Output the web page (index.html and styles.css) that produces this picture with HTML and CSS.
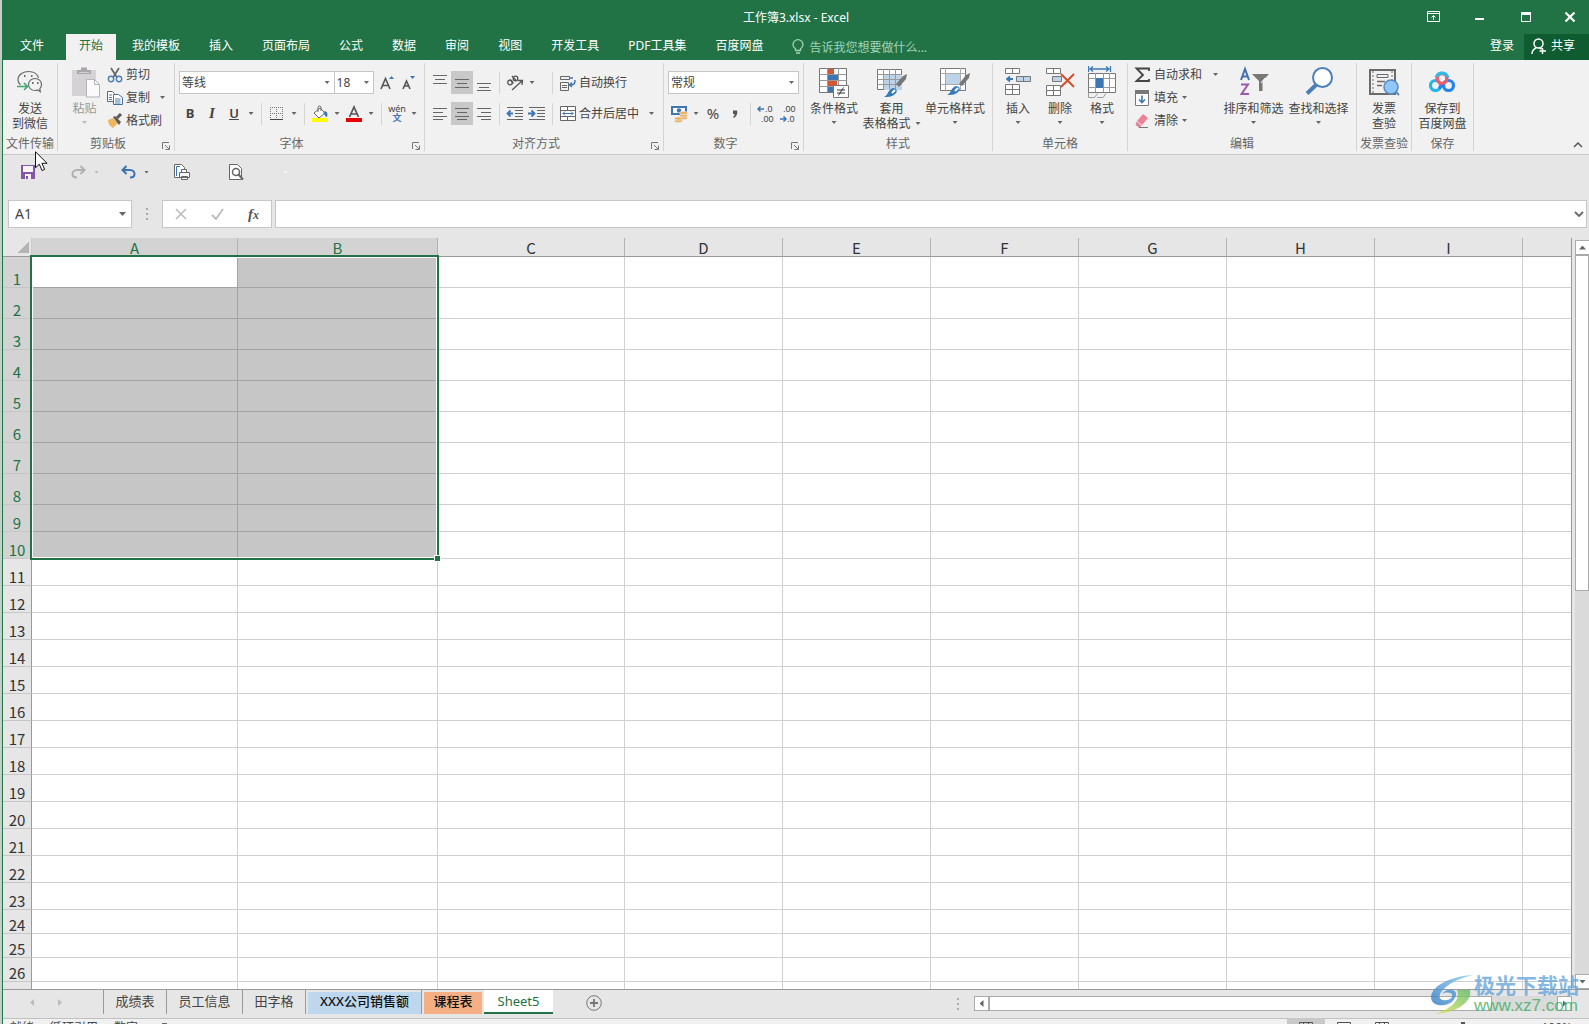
FILE: index.html
```html
<!DOCTYPE html>
<html lang="zh-CN">
<head>
<meta charset="utf-8">
<title>工作簿3.xlsx - Excel</title>
<link rel="stylesheet" href="styles.css">
</head>
<body>
<div class="app">
  <header class="titlebar">
    <h1 class="title">工作簿3.xlsx - Excel</h1>
    <div class="window-buttons">
      <button aria-label="功能区显示选项"><svg width="14" height="12" viewBox="0 0 14 12" fill="none" stroke="#fff"><path d="M.5 .5h12v10H.5zM.5 2.5h12M6.500 9V4.500M4.500 6.500l2-2 2 2"/></svg></button>
      <button aria-label="最小化"><svg width="12" height="12" viewBox="0 0 12 12"><path d="M1 8h9" stroke="#fff" stroke-width="2"/></svg></button>
      <button aria-label="最大化"><svg width="12" height="12" viewBox="0 0 12 12"><path d="M1.500 1.500h9v9h-9z" fill="none" stroke="#fff"/><path d="M1 1h10v3H1z" fill="#fff"/></svg></button>
      <button aria-label="关闭"><svg width="12" height="12" viewBox="0 0 12 12"><path d="M1.500 1.500l9 9M10.500 1.500l-9 9" stroke="#fff" stroke-width="2.200"/></svg></button>
    </div>
  </header>

  <nav class="tabs">
    <button class="file">文件</button>
    <button class="active">开始</button>
    <button>我的模板</button>
    <button>插入</button>
    <button>页面布局</button>
    <button>公式</button>
    <button>数据</button>
    <button>审阅</button>
    <button>视图</button>
    <button>开发工具</button>
    <button>PDF工具集</button>
    <button>百度网盘</button>
    <label class="tellme"><svg width="12" height="16" viewBox="0 0 12 16" fill="none" stroke="#a3d3b6" stroke-width="1.300"><path d="M3.500 11.500V9.800C2 8.800 1 7.300 1 5.700a5 5 0 0 1 10 0c0 1.600-1 3.100-2.500 4.100v1.700zM4 14h4"/></svg><input type="text" placeholder="告诉我您想要做什么..."></label>
    <button class="signin">登录</button>
    <button class="share"><svg width="16" height="17" viewBox="0 0 16 17" fill="none" stroke="#fff" stroke-width="1.500"><circle cx="7.500" cy="5.500" r="4.500"/><path d="M1 16c0-3 1.700-5 4-6M8.500 10l2 1M11.500 10v6M8.500 13h6.500"/></svg>共享</button>
  </nav>

  <section class="ribbon">
    <div class="group g-send">
      <div class="body center">
        <button class="big"><svg width="28" height="32" viewBox="0 0 28 32" fill="none" stroke="#6b6b6b" stroke-width="1.200"><path d="M22.500 12c-.8-3.900-4.800-6.500-9.700-6.500C7 5.500 2 9 2 13.700c0 2 1 3.800 2.500 5.200M2 13.700c0 2 .8 3.300 1.500 4"/><path d="M25.500 18.500c0-3.600-3-6-6.500-6s-6.500 2.400-6.500 6 3 6 6.500 6c1 0 2-.2 2.800-.6l2.500 1.800-.5-3c1-1 1.700-2.500 1.700-4.200z"/><path d="M1 20.500h10M8 17l3.500 3.500L8 24" stroke="#3fa66a" stroke-width="1.500"/><path d="M8 10h1.500M15 10h1.500M16 17h1.500M21 17h1.500" stroke-width="1.800"/></svg><span>发送<br>到微信</span></button>
      </div>
      <div class="label">文件传输</div>
    </div>

    <div class="group g-clip">
      <div class="body">
        <button class="big paste" disabled><svg width="30" height="32" viewBox="0 0 30 32"><path d="M2 4h24v26H2z" fill="#d5d2d5"/><path d="M7 8V4h4V1.500h6V4h4v4z" fill="#a9a7a9"/><path d="M9 6.500h10" stroke="#d5d2d5"/><path d="M16.500 13.500h8l5 5v12.500h-13z" fill="#fafafa" stroke="#b5b3b5"/><path d="M24.500 13.500v5h5" fill="none" stroke="#b5b3b5"/></svg><span>粘贴</span><i class="caret"></i></button>
        <div class="stack">
          <button><svg width="16" height="16" viewBox="0 0 16 16" fill="none"><path d="M4 1l6 9.500M12 1L6 10.500" stroke="#666" stroke-width="1.700"/><circle cx="4" cy="12" r="2.700" stroke="#4a7ebb" stroke-width="1.400"/><circle cx="12" cy="12" r="2.700" stroke="#4a7ebb" stroke-width="1.400"/></svg>剪切</button>
          <button><svg width="16" height="16" viewBox="0 0 16 16" fill="#fff" stroke="#666"><path d="M.5 1.500h5l2 2v8h-7z"/><path d="M6.500 4.500h5l4 3v7h-9z" stroke="#47709f"/><path d="M2 5h3M2 7.500h3M2 9.500h3M8 9h5.500M8 11h5.500M8 13h5.500" stroke="#4a7ebb"/></svg>复制<i class="caret far"></i></button>
          <button><svg width="16" height="16" viewBox="0 0 16 16"><path d="M1 7l5-2 5 5-5 5C3 13 1 11 1 7z" fill="#eeb65f"/><path d="M6 4l2-1 6 6-2 3z" fill="#5a5a5a"/><path d="M10 5l4-4" stroke="#5a5a5a" stroke-width="3"/></svg>格式刷</button>
        </div>
      </div>
      <div class="label with-launch">剪贴板<button class="launch" aria-label="剪贴板设置"><svg width="8" height="8" viewBox="0 0 8 8" fill="none" stroke="#777"><path d="M.5 7V.5H7M3 3l4 4M7.500 3.500v4h-4"/></svg></button></div>
    </div>

    <div class="group g-font">
      <div class="body rows">
        <div class="row">
          <div class="combo face"><select aria-label="字体"><option>等线</option></select><i class="caret"></i></div>
          <div class="combo size"><select aria-label="字号"><option>18</option></select><i class="caret"></i></div>
          <button class="tool" aria-label="增大字号"><svg width="20" height="20" viewBox="0 0 20 20"><path d="M4 16L8.500 5.500 13 16M5.500 12.500h6" fill="none" stroke="#555" stroke-width="1.600"/><path d="M12 6l2.500-3L17 6z" fill="#3d76b5"/></svg></button>
          <button class="tool" aria-label="减小字号"><svg width="20" height="20" viewBox="0 0 20 20"><path d="M4 16l3.500-8 3.500 8M5.500 13h4.500" fill="none" stroke="#555" stroke-width="1.600"/><path d="M11 3l2.500 3L16 3z" fill="#3d76b5"/></svg></button>
        </div>
        <div class="row">
          <button class="tool b">B</button><button class="tool i">I</button><button class="tool u">U</button><button class="drop" aria-label="下划线"><i class="caret"></i></button>
          <i class="sep"></i>
          <button class="tool" aria-label="边框"><svg width="14" height="14" viewBox="0 0 14 14" stroke="#777" stroke-dasharray="1 1"><path d="M.5 0v13M6.500 0v13M12.500 0v13M0 .5h13M0 6.500h13"/><path d="M0 12.500h13" stroke="#444" stroke-dasharray="none"/></svg></button><button class="drop" aria-label="更多边框"><i class="caret"></i></button>
          <i class="sep"></i>
          <button class="tool" aria-label="填充颜色"><svg width="18" height="18" viewBox="0 0 18 18"><path d="M3 8l6-5 5 5-6 5z" fill="#fff" stroke="#666"/><path d="M7 7V2.500a1.500 1.500 0 0 1 3 0V6" fill="none" stroke="#666"/><path d="M14 6c2.500 1 3 3 2 6-2 0-2-3-4-4z" fill="#3d76b5"/><path d="M1 13h16v4H1z" fill="#ff0"/></svg></button><button class="drop" aria-label="更多填充颜色"><i class="caret"></i></button>
          <button class="tool" aria-label="字体颜色"><svg width="18" height="18" viewBox="0 0 18 18"><path d="M4.500 12L9 2l4.500 10M6 9h6" fill="none" stroke="#555" stroke-width="1.700"/><path d="M1 13h16v4H1z" fill="#e80000"/></svg></button><button class="drop" aria-label="更多字体颜色"><i class="caret"></i></button>
          <i class="sep"></i>
          <button class="tool pinyin"><span>wén</span><b>文</b></button><button class="drop" aria-label="拼音选项"><i class="caret"></i></button>
        </div>
      </div>
      <div class="label with-launch">字体<button class="launch" aria-label="字体设置"><svg width="8" height="8" viewBox="0 0 8 8" fill="none" stroke="#777"><path d="M.5 7V.5H7M3 3l4 4M7.500 3.500v4h-4"/></svg></button></div>
    </div>

    <div class="group g-align">
      <div class="body rows">
        <div class="row">
          <button class="tool" aria-label="顶端对齐"><svg width="14" height="16" viewBox="0 0 14 16" stroke="#666"><path d="M0 .5h14M2 4.500h10M0 8.500h14"/></svg></button><button class="tool on" aria-label="垂直居中"><svg width="14" height="16" viewBox="0 0 14 16" stroke="#666"><path d="M0 4.500h14M2 8.500h10M0 12.500h14"/></svg></button><button class="tool" aria-label="底端对齐"><svg width="14" height="16" viewBox="0 0 14 16" stroke="#666"><path d="M0 8.500h14M2 12.500h10M0 15.500h14"/></svg></button>
          <i class="sep"></i>
          <div class="pair"><button class="tool" aria-label="方向"><svg width="18" height="18" viewBox="0 0 18 18" fill="none" stroke="#555" stroke-width="1.300"><circle cx="4" cy="8.500" r="2.300"/><path d="M4 5.500l3.500 4M6 2l4.500 5"/><circle cx="9.500" cy="4.500" r="2.300"/><path d="M6 16l10-9M12 6.500l4.500 0-.5 4.500"/></svg></button><button class="drop" aria-label="更多方向"><i class="caret"></i></button></div>
          <i class="sep"></i>
          <button class="text-tool"><svg width="16" height="16" viewBox="0 0 16 16" fill="none" stroke="#666"><path d="M.5 1.500h9v3h-9zM.5 7.500h8v8h-8zM2 10.500h5M2 12.500h5"/><path d="M9 3h4M15 5c0 4-1 5-5 5M12 7.500L9.500 10l2.500 2" stroke="#3d76b5" stroke-width="1.500"/></svg>自动换行</button>
        </div>
        <div class="row">
          <button class="tool" aria-label="左对齐"><svg width="14" height="12" viewBox="0 0 14 12" stroke="#666"><path d="M0 .5h14M0 4.500h10M0 8.500h14M0 11.500h10"/></svg></button><button class="tool on" aria-label="居中"><svg width="14" height="12" viewBox="0 0 14 12" stroke="#666"><path d="M0 .5h14M2 4.500h10M0 8.500h14M2 11.500h10"/></svg></button><button class="tool" aria-label="右对齐"><svg width="14" height="12" viewBox="0 0 14 12" stroke="#666"><path d="M0 .5h14M4 4.500h10M0 8.500h14M4 11.500h10"/></svg></button>
          <i class="sep"></i>
          <div class="pair"><button class="tool" aria-label="减少缩进"><svg width="18" height="14" viewBox="0 0 18 14" stroke="#666"><path d="M1 .5h16M9 3.500h8M9 6.500h8M9 9.500h8M1 12.500h16"/><path d="M1 6.500h6M4.500 3.500l-3 3 3 3" fill="none" stroke="#3d76b5" stroke-width="1.800"/></svg></button><button class="tool" aria-label="增加缩进"><svg width="18" height="14" viewBox="0 0 18 14" stroke="#666"><path d="M1 .5h16M9 3.500h8M9 6.500h8M9 9.500h8M1 12.500h16"/><path d="M0 6.500h6M3.500 3.500l3 3-3 3" fill="none" stroke="#3d76b5" stroke-width="1.800"/></svg></button></div>
          <i class="sep"></i>
          <button class="text-tool"><svg width="16" height="16" viewBox="0 0 16 16" fill="#fff" stroke="#666"><path d="M.5 .5h15v14H.5zM.5 4.500h15M.5 10.500h15M7.500 .5v4M7.500 10.500v4"/><path d="M2.500 7.500h11M5 5.500l-2 2 2 2M11 5.500l2 2-2 2" fill="none" stroke="#3d76b5"/></svg>合并后居中<i class="caret far"></i></button>
        </div>
      </div>
      <div class="label with-launch">对齐方式<button class="launch" aria-label="对齐设置"><svg width="8" height="8" viewBox="0 0 8 8" fill="none" stroke="#777"><path d="M.5 7V.5H7M3 3l4 4M7.500 3.500v4h-4"/></svg></button></div>
    </div>

    <div class="group g-num">
      <div class="body rows">
        <div class="row">
          <div class="combo format"><select aria-label="数字格式"><option>常规</option></select><i class="caret"></i></div>
        </div>
        <div class="row">
          <button class="tool" aria-label="会计数字格式"><svg width="18" height="18" viewBox="0 0 18 18"><path d="M1 1h16v9H1z" fill="#3d76b5"/><path d="M3 3h12v5H3z" fill="#fff"/><circle cx="9" cy="5.500" r="2.200" fill="#3d76b5"/><g fill="#eab265" stroke="#f0f0f0" stroke-width=".6"><ellipse cx="13.500" cy="13" rx="4" ry="1.700"/><ellipse cx="13.500" cy="10.500" rx="4" ry="1.700"/><ellipse cx="13.500" cy="8" rx="4" ry="1.700"/><ellipse cx="8.500" cy="16" rx="4" ry="1.700"/><ellipse cx="8.500" cy="13.500" rx="4" ry="1.700"/></g></svg></button><button class="drop" aria-label="更多会计格式"><i class="caret"></i></button>
          <button class="tool pct">%</button><button class="tool" aria-label="千位分隔样式"><svg width="8" height="10" viewBox="0 0 8 10"><path d="M2 1.500h4c1 3-.5 6-3 7.500l-1-1c1.200-1 1.700-2 1.500-3H2z" fill="#555"/></svg></button>
          <i class="sep"></i>
          <button class="tool" aria-label="增加小数位数"><svg class="decimals" width="18" height="20" viewBox="0 0 18 20"><text x="8" y="8">.0</text><text x="4" y="18">.00</text><path d="M1 5h6M3.500 2.500L1 5l2.500 2.500"/></svg></button><button class="tool" aria-label="减少小数位数"><svg class="decimals" width="18" height="20" viewBox="0 0 18 20"><text x="4" y="8">.00</text><text x="8" y="18">.0</text><path d="M1 15h6M4.500 12.500L7 15l-2.500 2.500"/></svg></button>
        </div>
      </div>
      <div class="label with-launch">数字<button class="launch" aria-label="数字设置"><svg width="8" height="8" viewBox="0 0 8 8" fill="none" stroke="#777"><path d="M.5 7V.5H7M3 3l4 4M7.500 3.500v4h-4"/></svg></button></div>
    </div>

    <div class="group g-style">
      <div class="body">
        <button class="big w-cond"><svg width="30" height="32" viewBox="0 0 30 32"><path d="M.5 2.500h27v24H.5z" fill="#fff" stroke="#777"/><path d="M.5 8.500h27M.5 14.500h27M.5 20.500h27M8.500 2v24M19.500 2v24" stroke="#999"/><path d="M9 3h6v5H9zM9 15h9v5H9z" fill="#d65532"/><path d="M9 9h10v5H9zM9 21h5v5H9z" fill="#3d76b5"/><path d="M14.500 19.500h15v12h-15z" fill="#fff" stroke="#777"/><path d="M18 24h8M18 27h8M24.500 21.500l-5 8" stroke="#333"/></svg><span>条件格式</span><i class="caret"></i></button>
        <button class="big w-table"><svg width="30" height="32" viewBox="0 0 30 32"><path d="M.5 3.500h24v20H.5z" fill="#fff" stroke="#777"/><path d="M7 9h18v15H7z" fill="#bdd3e9"/><path d="M.5 8.500h24M.5 13.500h24M.5 18.500h24M6.500 3v20M12.500 3v20M18.500 3v20" stroke="#999"/><path d="M19 18l7-8 4-2-1 5-7 8z" fill="#777"/><path d="M7 31c4-1 4-8 9-9 4 0 5 4 2 6-3 3-7 3-11 3z" fill="#3579b8"/><path d="M15 27l3-3" stroke="#fff" stroke-width="2"/></svg><span>套用<br>表格格式<i class="caret in"></i></span></button>
        <button class="big w-cell"><svg width="30" height="32" viewBox="0 0 30 32"><path d="M.5 2.500h25v22H.5z" fill="#fff" stroke="#777"/><path d="M.5 7.500h25M.5 18.500h25M5.500 2v22M20.500 2v22" stroke="#aaa"/><path d="M6 8h14v10H6z" fill="#bdd3e9"/><path d="M19 18l7-9 4-2-1 5-7 8z" fill="#777"/><path d="M7 29c4-1 4-8 9-9 4 0 5 4 2 6-3 3-7 3-11 3z" fill="#3579b8"/><path d="M15 25l3-3" stroke="#fff" stroke-width="2"/></svg><span>单元格样式</span><i class="caret"></i></button>
      </div>
      <div class="label">样式</div>
    </div>

    <div class="group g-cells">
      <div class="body">
        <button class="big w-42"><svg width="28" height="32" viewBox="0 0 28 32" fill="#fff" stroke="#777"><path d="M1.500 2.500h14v5h-14zM8.500 2.500v5M1.500 18.500h14v10h-14zM8.500 18.500v10M1.500 23.500h14"/><path d="M12.500 10.500h14v5h-14zM19.500 10.500v5" fill="#bdd3e9"/><path d="M3 13h6M6 10.500L3 13l3 2.500" fill="none" stroke="#3d76b5" stroke-width="1.800"/></svg><span>插入</span><i class="caret"></i></button>
        <button class="big w-42"><svg width="30" height="32" viewBox="0 0 30 32" fill="#fff" stroke="#777"><path d="M1.500 2.500h14v5h-14zM8.500 2.500v5M1.500 19.500h14v10h-14zM8.500 19.500v10M1.500 24.500h14"/><path d="M7.500 10.500h9v5h-9z" fill="#bdd3e9"/><path d="M16 8l13 13M29 8L16 21" stroke="#d9482b" stroke-width="1.800"/></svg><span>删除</span><i class="caret"></i></button>
        <button class="big w-42"><svg width="28" height="32" viewBox="0 0 28 32"><path d="M.5 0v6M22.500 0v6M2 3h19M5 .5L2 3l3 2.500M18 .5L21 3l-3 2.500" fill="none" stroke="#3d76b5" stroke-width="1.300"/><path d="M.5 7.500h27v19H.5z" fill="#fff" stroke="#777"/><path d="M.5 12.500h27M.5 21.500h27M7.500 7v19M15.500 7v19M21.500 7v19M.5 26.500v5h6l3-4M9 31.500h6l3-4" fill="none" stroke="#999"/><path d="M8 12h7v10H8z" fill="#3d76b5"/></svg><span>格式</span><i class="caret"></i></button>
      </div>
      <div class="label">单元格</div>
    </div>

    <div class="group g-edit">
      <div class="body">
        <div class="stack edit">
          <button><svg width="16" height="16" viewBox="0 0 16 16"><path d="M15 4V1.500H2.500L9 8l-6.500 6H15V12" fill="none" stroke="#444" stroke-width="1.800"/></svg>自动求和<i class="caret far"></i></button>
          <button><svg width="16" height="16" viewBox="0 0 16 16"><path d="M1.500 .5h13v15h-13z" fill="#fff" stroke="#777"/><path d="M1 0h14v4H1z" fill="#777"/><path d="M8 5.500v7M5 9.500l3 3 3-3" fill="none" stroke="#3d76b5" stroke-width="1.600"/></svg>填充<i class="caret"></i></button>
          <button><svg width="16" height="16" viewBox="0 0 16 16"><path d="M9 1l5 4-6 7-5-4z" fill="#ec8296"/><path d="M2.500 8.500l5 4-2 2.500-4-3z" fill="#d7899a"/><path d="M5 14.500h9" stroke="#777"/></svg>清除<i class="caret"></i></button>
        </div>
        <button class="big w-65"><svg width="32" height="32" viewBox="0 0 32 32"><path d="M3 14L7 3l4 11M4.500 10.500h5" fill="none" stroke="#4472ae" stroke-width="2"/><path d="M3 18.500h7L3.500 28H11" fill="none" stroke="#9a58b0" stroke-width="2"/><path d="M14 8h17l-6.500 7v10h-3.500V15z" fill="#777"/><path d="M23 17l4-5" stroke="#fff"/></svg><span>排序和筛选</span><i class="caret"></i></button>
        <button class="big w-65"><svg width="30" height="32" viewBox="0 0 30 32"><circle cx="18.500" cy="11.500" r="9.500" fill="#fff" stroke="#4a7ebb" stroke-width="2"/><path d="M12 19L3 27.500" stroke="#4a7ebb" stroke-width="4"/></svg><span>查找和选择</span><i class="caret"></i></button>
      </div>
      <div class="label">编辑</div>
    </div>

    <div class="group g-inv">
      <div class="body center">
        <button class="big"><svg width="32" height="32" viewBox="0 0 32 32" fill="none"><path d="M2 4h25v24H2z" stroke="#6b6b6b" stroke-width="2"/><path d="M5 5v22M24 5v22" stroke="#6b6b6b" stroke-dasharray="2 2"/><path d="M9 8.500h11v3H9z" stroke="#6b6b6b"/><path d="M9 15.500h8M9 19.500h5" stroke="#6b6b6b" stroke-width="1.500"/><circle cx="23" cy="21" r="7" fill="#8fc7fa" stroke="#5889bd" stroke-width="1.500"/><path d="M28 26l3 3" stroke="#5889bd" stroke-width="2"/></svg><span>发票<br>查验</span></button>
      </div>
      <div class="label">发票查验</div>
    </div>

    <div class="group g-save">
      <div class="body center">
        <button class="big"><svg width="28" height="32" viewBox="0 0 28 32" fill="none" stroke-width="3.200"><circle cx="7.500" cy="19.500" r="5" stroke="#22b4f0"/><circle cx="20.500" cy="19.500" r="5" stroke="#2585f0"/><path d="M16.500 16.500l-5.500 6" stroke="#2585f0"/><path d="M8.300 12a5.800 5.800 0 0 1 11.400 0" stroke="#35b8e8"/><circle cx="14" cy="12.500" r="4.800" stroke="#f25a68"/><path d="M8.500 11a5.800 5.800 0 0 1 11 0" stroke="#35b8e8"/></svg><span>保存到<br>百度网盘</span></button>
      </div>
      <div class="label">保存</div>
    </div>
    <button class="collapse" aria-label="折叠功能区"><svg width="10" height="8" viewBox="0 0 10 8"><path d="M1 6l4-4 4 4" fill="none" stroke="#555" stroke-width="1.500"/></svg></button>
  </section>

  <div class="qat">
    <button class="save" aria-label="保存"><svg width="14" height="14" viewBox="0 0 14 14"><path d="M0 0h14v14H0z" fill="#8455a8"/><path d="M2 1h10v6H2zM4 9h6v5H4z" fill="#f4f4f4"/><path d="M5 11h2v3H5z" fill="#8455a8"/></svg></button>
    <button class="redo" aria-label="恢复"><svg width="15" height="14" viewBox="0 0 15 14" fill="none" stroke="#b0b0b0" stroke-width="2"><path d="M13 5H6C3 5 1.500 7 1.500 9S3 12.500 6 12.500M9.500 1L13.500 5l-4 4"/></svg><i class="caret"></i></button>
    <button class="undo" aria-label="撤消"><svg width="15" height="14" viewBox="0 0 15 14" fill="none" stroke="#3d72b0" stroke-width="2"><path d="M2 5h7c3 0 4.500 2 4.500 4s-1.500 3.500-4.500 3.500M5.500 1L1.500 5l4 4"/></svg><i class="caret"></i></button>
    <button class="print" aria-label="快速打印"><svg width="16" height="16" viewBox="0 0 16 16" fill="#fff" stroke="#666"><path d="M.5 .5h7l3 3v10H.5z"/><path d="M2.500 12V2.500H6" fill="none" stroke="#3d76b5"/><path d="M5.500 8.500h10v5h-10zM7.500 5.500h5v3h-5zM7.500 12.500h6v3h-6z" /></svg></button>
    <button class="preview" aria-label="打印预览"><svg width="15" height="17" viewBox="0 0 15 17" fill="none" stroke="#666"><path d="M.5 .5h8l4 4v11H.5z" fill="#fff"/><circle cx="7" cy="8" r="3.500" stroke-width="1.500"/><path d="M9.500 10.500L14 15.500" stroke-width="2"/></svg></button>
    <button class="more" aria-label="自定义快速访问工具栏"><i class="caret"></i></button>
  </div>

  <div class="formula">
    <div class="namebox"><input type="text" value="A1" aria-label="名称框"><i class="caret"></i></div>
    <svg class="grip" width="3" height="12" viewBox="0 0 3 12" fill="#aaa"><path d="M0 0h2v2H0zM0 5h2v2H0zM0 10h2v2H0z"/></svg>
    <div class="fx">
      <button aria-label="取消"><svg width="12" height="12" viewBox="0 0 12 12"><path d="M1 1l10 10M11 1L1 11" stroke="#bbb" stroke-width="1.600"/></svg></button>
      <button aria-label="输入"><svg width="13" height="12" viewBox="0 0 13 12"><path d="M1 7l4 4 7-10" fill="none" stroke="#bbb" stroke-width="1.800"/></svg></button>
      <button class="fn" aria-label="插入函数">f<small>x</small></button>
    </div>
    <div class="entry"><input type="text" aria-label="编辑栏"><svg width="10" height="8" viewBox="0 0 10 8"><path d="M1 2l4 4 4-4" fill="none" stroke="#666" stroke-width="1.800"/></svg></div>
  </div>

  <main class="sheet">
    <div class="grid-area">
      <table class="grid">
        <colgroup><col class="c-head"><col class="c-a"><col class="c-b"><col class="c-c"><col class="c-d"><col class="c-n"><col class="c-n"><col class="c-n"><col class="c-n"><col class="c-n"><col></colgroup>
        <thead><tr><th class="corner"></th><th class="sel">A</th><th class="sel">B</th><th>C</th><th>D</th><th>E</th><th>F</th><th>G</th><th>H</th><th>I</th><th class="last"></th></tr></thead>
        <tbody id="rows"></tbody>
      </table>
      <div class="selection"></div>
    </div>
    <div class="vscroll">
      <button aria-label="向上滚动"><i class="tri up"></i></button>
      <div class="thumb"></div>
      <div class="track"></div>
      <button aria-label="向下滚动"><i class="tri down"></i></button>
    </div>
  </main>

  <footer class="sheetbar">
    <div class="navs"><button aria-label="上一个"><i class="tri left dim"></i></button><button aria-label="下一个"><i class="tri right dim"></i></button></div>
    <div class="sheet-tabs">
      <button class="t1">成绩表</button>
      <button class="t2">员工信息</button>
      <button class="t1">田字格</button>
      <button class="blue"><span>XXX公司销售额</span></button>
      <button class="orange"><span>课程表</span></button>
      <button class="current">Sheet5</button>
    </div>
    <button class="add" aria-label="新工作表"><svg width="16" height="16" viewBox="0 0 16 16" fill="none" stroke="#777"><circle cx="8" cy="8" r="7.300"/><path d="M8 4v8M4 8h8" stroke-width="1.800"/></svg></button>
    <svg class="grip" width="3" height="12" viewBox="0 0 3 12" fill="#aaa"><path d="M0 0h2v2H0zM0 5h2v2H0zM0 10h2v2H0z"/></svg>
    <div class="hscroll">
      <button aria-label="向左滚动"><i class="tri left"></i></button>
      <div class="thumb"></div>
      <div class="track"></div>
      <button aria-label="向右滚动"><i class="tri right"></i></button>
    </div>
  </footer>

  <div class="status">
    <span>就绪</span><span>循环引用</span><span>数字</span>
    <svg width="14" height="12" viewBox="0 0 14 12"><path d="M0 2h6v3H0zM8 1h5v4H8zM0 6h13v5H0z" fill="#666"/></svg>
    <div class="views">
      <button class="on" aria-label="普通"><svg width="14" height="12" viewBox="0 0 14 12" fill="none" stroke="#555"><path d="M.5 .5h13v11H.5zM.5 4.500h13M.5 8.500h13M4.500 .5v11M9.500 .5v11"/></svg></button>
      <button aria-label="页面布局"><svg width="14" height="12" viewBox="0 0 14 12" fill="none" stroke="#555"><path d="M.5 .5h13v11H.5zM3.500 2.500h7v7h-7z"/></svg></button>
      <button aria-label="分页预览"><svg width="14" height="12" viewBox="0 0 14 12" fill="none" stroke="#555"><path d="M.5 .5h13v11H.5zM4.500 .5v6h5v-6"/></svg></button>
    </div>
    <i class="knob"></i>
    <span class="zoom">100%</span>
  </div>
</div>

<svg class="pointer" width="13" height="21" viewBox="0 0 13 21"><path d="M.5 .8v16l3.800-3.600 2.700 6.300 2.600-1.100-2.700-6.100h5.200z" fill="#fff" stroke="#111"/></svg>
<div class="watermark">
  <svg width="44" height="40" viewBox="0 0 44 40"><defs><linearGradient id="wb" x1="0" y1="1" x2="1" y2="0"><stop offset="0" stop-color="#2f78c4"/><stop offset="1" stop-color="#8ed0f2"/></linearGradient><linearGradient id="wg" x1="0" y1="1" x2="1" y2="0"><stop offset="0" stop-color="#e3e04e"/><stop offset="1" stop-color="#5cbd6c"/></linearGradient></defs><path d="M43 0C22 1 2 10 1 22c0 7 7 9 13 8 8-1 12-6 11-11-2 4-7 7-12 6C4 23 13 7 43 0z" fill="url(#wb)"/><path d="M12 19c3-5 12-6 14-1 1 6-6 9-12 8 5 0 9-3 8-6s-6-3-10-1z" fill="#4b92d3"/><path d="M27 15h13c2 10-9 22-35 24 15-5 26-13 22-24z" fill="url(#wg)"/></svg>
  <div><b>极光下载站</b><span>www.xz7.com</span></div>
</div>
<script src="script.js"></script>
</body>
</html>
```
FILE: styles.css
```css
* { box-sizing: border-box; }
body {
  margin: 0;
  height: 100vh;
  overflow: hidden;
  position: relative;
  background: #c3cfc8;
  color: #444;
  font: 12px/15px "Noto Sans", "Noto Sans CJK SC", sans-serif;
}
button, input, select { font: inherit; color: inherit; border: 0; background: none; padding: 0; margin: 0; }
input { min-width: 0; outline: 0; }
svg { display: block; flex: none; }
.app {
  display: flex;
  flex-direction: column;
  height: calc(100vh + 14px);
  margin-left: 2px;
  border-left: 1px solid #217346;
  background: #e6e6e6;
}
.caret { flex: none; width: 5px; height: 3px; background: #666; clip-path: polygon(0 0, 100% 0, 50% 100%); }

/* title and ribbon tabs */
.titlebar { display: grid; grid-template-columns: 1fr auto 1fr; height: 34px; background: #217346; color: #fff; align-items: center; }
.title { grid-column: 2; margin: 0; font-size: 12px; font-weight: 400; }
.window-buttons { justify-self: end; display: flex; }
.window-buttons button { width: 46px; height: 32px; display: grid; place-items: center; }
.window-buttons button:last-child { width: 40px; padding-left: 2px; }
.tabs { display: flex; gap: 3px; height: 26px; padding-left: 4px; background: #217346; color: #fff; }
.tabs button { padding: 0 13px 2px; line-height: 22px; white-space: nowrap; }
.tabs .file { margin-right: 6px; }
.tabs .active { background: #f1f1f1; color: #217346; }
.tellme { display: flex; align-items: center; gap: 5px; margin-left: 13px; flex: 1; }
.tellme input { flex: 1; }
.tellme input::placeholder { color: #a3d3b6; opacity: 1; }
.tabs .signin { padding: 0 7px 2px; }
.tabs .share { display: flex; align-items: center; gap: 4px; width: 65px; padding: 0 7px 2px; background: #0e5c2f; }

/* ribbon */
.ribbon { display: flex; padding: 3px 0; height: 95px; background: #f1f1f1; border-bottom: 1px solid #c8c8c8; }
.group { flex: none; display: flex; flex-direction: column; border-right: 1px solid #d4d4d4; }
.g-send { width: 55px; }
.g-clip { width: 117px; }
.g-font { width: 250px; }
.g-align { width: 239px; }
.g-num { width: 140px; }
.g-style { width: 189px; }
.g-cells { width: 135px; }
.g-edit { width: 229px; }
.g-inv { width: 55px; }
.g-save { width: 62px; }
.body { display: flex; height: 73px; padding: 0 4px; }
.body.center { justify-content: center; padding: 0; }
.body.rows { flex-direction: column; gap: 8px; padding-top: 8px; }
.row { display: flex; align-items: center; height: 23px; }
.label { position: relative; text-align: center; color: #666; white-space: nowrap; }
.with-launch { padding-right: 16px; }
.launch { position: absolute; right: 4px; top: 6px; }
.big { display: flex; flex-direction: column; align-items: center; padding-top: 3px; white-space: nowrap; line-height: 15px; }
.big svg { margin-bottom: 3px; }
.big > .caret { margin-top: 5px; }
.caret.in { display: inline-block; margin: 0 0 3px 5px; }
.paste { width: 45px; color: #999; }
.paste .caret { background: #bbb; }
.w-cond { width: 52px; }
.w-table { width: 63px; }
.w-cell { width: 64px; }
.w-42 { width: 42px; }
.w-65 { width: 65px; }
.stack { display: flex; flex-direction: column; flex: 1; }
.stack.edit { flex: none; width: 89px; padding-left: 2px; }
.stack button { display: flex; align-items: center; gap: 3px; height: 23px; white-space: nowrap; }
.stack.edit button { gap: 4px; }
.stack .caret.far { margin-left: 7px; }
.combo { position: relative; display: flex; height: 23px; border: 1px solid #c6c6c6; background: #fff; }
.combo select { appearance: none; flex: 1; padding-left: 2px; outline: 0; }
.combo .caret { position: absolute; right: 4px; top: 9px; }
.face { width: 158px; }
.size { width: 41px; margin: 0 2px 0 -1px; }
.format { width: 131px; }
.tool { flex: none; width: 22px; height: 23px; display: grid; place-items: center; }
.tool.on { background: #c8c8c8; }
.drop { flex: none; width: 12px; height: 23px; display: grid; place-items: center; }
.sep { width: 1px; height: 22px; margin: 0 4px; background: #d4d4d4; }
.pair { display: flex; width: 44px; }
.tool.b, .tool.i, .tool.u { font-size: 13px; font-weight: 700; }
.tool.i { font-family: "Liberation Serif", serif; font-style: italic; font-size: 15px; }
.tool.u { text-decoration: underline; font-weight: 600; }
.pinyin { place-content: center; font-size: 9px; line-height: 9px; }
.pinyin b { color: #3d76b5; line-height: 10px; }
.pct { font-size: 15px; }
.decimals { font: 9px "Liberation Sans", sans-serif; fill: #444; }
.decimals path { fill: none; stroke: #3d76b5; stroke-width: 1.5; }
.text-tool { display: flex; align-items: center; gap: 3px; margin-left: 3px; white-space: nowrap; }
.text-tool .far { margin-left: 7px; }
.collapse { margin: auto 6px 2px auto; }

/* quick access toolbar */
.qat { display: flex; align-items: center; height: 45px; padding: 0 18px 11px; }
.qat button { display: flex; align-items: center; gap: 8px; }
.qat .save { margin-right: 36px; }
.qat .redo { margin-right: 22px; }
.qat .undo { margin-right: 25px; }
.qat .print { margin-right: 39px; }
.qat .preview { margin-right: 39px; }
.redo .caret { background: #bbb; }
.more .caret { background: #f6f6f6; }

/* formula bar */
.formula { display: flex; align-items: center; height: 28px; margin: 0 2px 10px 5px; }
.namebox, .fx, .entry { display: flex; align-items: center; height: 28px; background: #fff; border: 1px solid #c6c6c6; }
.namebox { width: 124px; padding: 0 5px 0 6px; font-size: 14px; }
.namebox input { flex: 1; padding-bottom: 2px; }
.namebox .caret { width: 7px; height: 4px; }
.formula .grip { margin: 0 13px 0 14px; }
.fx { width: 110px; padding: 0 12px; justify-content: space-between; }
.fn { font: italic 700 15px/20px "Liberation Serif", serif; color: #555; }
.fn small { font-size: 12px; }
.entry { flex: 1; margin-left: 3px; padding-right: 2px; }
.entry input { flex: 1; }

/* worksheet */
.sheet { flex: 1; min-height: 0; display: flex; overflow: hidden; }
.grid-area { flex: 1; min-width: 0; position: relative; overflow: hidden; border-right: 1px solid #999; }
.grid { width: 100%; table-layout: fixed; border-collapse: separate; border-spacing: 0; }
.c-head { width: 29px; }
.c-a { width: 206px; }
.c-b { width: 200px; }
.c-c { width: 187px; }
.c-d { width: 158px; }
.c-n { width: 148px; }
.grid th { padding: 0; background: #e6e6e6; color: #333; font: 15px/16px "Noto Sans CJK SC", sans-serif; }
.grid thead th { height: 19px; padding-top: 2px; border-right: 1px solid #b4b4b4; border-bottom: 1px solid #999; }
tbody th { border-right: 1px solid #999; border-bottom: 1px solid #c6c6c6; vertical-align: bottom; }
.grid .last { border-right: 0; }
.grid th.sel { background: #d3d3d3; color: #217346; }
.grid th.corner { background: linear-gradient(135deg, #e6e6e6 50%, #b4b4b4 50%) 15px 4px / 11px 11px no-repeat #e6e6e6; border-right-color: #ccc; }
.grid td { padding: 0; background: #fff; border-right: 1px solid #d0d0d0; border-bottom: 1px solid #d0d0d0; }
.grid td.sel { background: #c6c6c6; border-color: #a3a3a3; }
.grid td.cursor { background: #fff; }
.r31 { height: 31px; }
.r27 { height: 27px; }
.r24 { height: 24px; }
.selection { position: absolute; left: 27px; top: 17px; width: 409px; height: 305px; border: 2px solid #217346; box-shadow: inset 0 0 0 1px #fff; }
.selection::after { content: ""; position: absolute; right: -3px; bottom: -3px; width: 5px; height: 5px; background: #217346; outline: 1px solid #fff; }
.tri { display: block; width: 7px; height: 4px; background: #666; }
.tri.up { clip-path: polygon(50% 0, 100% 100%, 0 100%); }
.tri.down { clip-path: polygon(0 0, 100% 0, 50% 100%); }
.tri.left, .tri.right { width: 4px; height: 7px; }
.tri.left { clip-path: polygon(100% 0, 100% 100%, 0 50%); }
.tri.right { clip-path: polygon(0 0, 100% 50%, 0 100%); }
.tri.dim { background: #bbb; }
.vscroll { width: 17px; padding: 2px 0 0 3px; display: flex; flex-direction: column; }
.vscroll button, .hscroll button { flex: none; display: grid; place-items: center; width: 15px; height: 15px; background: #fff; border: 1px solid #aaa; }
.vscroll .thumb { height: 336px; background: #fff; border: 1px solid #aaa; }
.vscroll .track { flex: 1; background: #dadada; }

/* sheet tabs */
.sheetbar { display: flex; flex: none; height: 30px; border-top: 1px solid #999; border-bottom: 1px solid #c0c0c0; font-size: 13px; }
.navs { display: flex; width: 100px; padding: 0 0 3px 27px; gap: 24px; }
.sheet-tabs { display: flex; height: 24px; }
.sheet-tabs button { border-left: 1px solid #999; white-space: nowrap; line-height: 20px; padding: 0 0 3px; }
.sheet-tabs .t1 { width: 63px; }
.sheet-tabs .t2 { width: 76px; }
.sheet-tabs .blue, .sheet-tabs .orange { color: #111; font-weight: 500; padding: 2px 0 0 2px; }
.sheet-tabs span { display: block; height: 22px; line-height: 18px; }
.sheet-tabs .blue { width: 116px; }
.sheet-tabs .orange { width: 61px; margin-right: 2px; }
.blue span { background: #bdd7ee; }
.orange span { background: #f4b084; }
.sheet-tabs .current { width: 69px; border: 0; border-bottom: 2px solid #217346; padding: 0; background: #fff; color: #217346; }
.add { margin: 0 auto 3px 33px; }
.sheetbar .grip { margin: 8px 14px 0 0; }
.hscroll { display: flex; align-items: flex-start; width: 39%; max-width: 615px; padding: 6px 17px 0 0; }
.hscroll .thumb { flex: 503; height: 15px; background: #fff; border: 1px solid #aaa; }
.hscroll .track { flex: 65; height: 15px; background: #dadada; }

/* status bar */
.status { display: flex; flex: none; align-items: center; height: 19px; padding: 0 17px 2px 7px; background: #f1f1f1; gap: 16px; }
.views { display: flex; margin-left: auto; }
.views button { width: 38px; height: 19px; display: grid; place-items: center; }
.views .on { background: #c8c8c8; }
.knob { width: 4px; height: 12px; background: #555; margin-left: 44px; }
.zoom { margin-left: 60px; }

.pointer { position: absolute; left: 35px; top: 151px; }
.watermark { position: absolute; right: 10px; bottom: 9px; display: flex; opacity: .8; }
.watermark div { display: flex; flex-direction: column; gap: 2px; }
.watermark b { font-size: 21px; line-height: 20px; color: #68a7dc; }
.watermark span { font: 17px/18px "Liberation Sans", sans-serif; color: #3fae62; }
```
FILE: script.js
```js
// Row heights: 1-8 tall, 9-23 medium, 24 onwards short.
const body = document.getElementById('rows');
for (let r = 1; r <= 27; r++) {
  const tr = document.createElement('tr');
  tr.className = r <= 8 ? 'r31' : r <= 23 ? 'r27' : 'r24';
  const th = document.createElement('th');
  if (r <= 26) th.textContent = r;
  if (r <= 10) th.className = 'sel';
  tr.append(th);
  for (let c = 0; c < 10; c++) {
    const td = document.createElement('td');
    if (r <= 10 && c < 2) td.className = r === 1 && c === 0 ? 'sel cursor' : 'sel';
    if (c === 9) td.className = 'last';
    tr.append(td);
  }
  body.append(tr);
}
```
